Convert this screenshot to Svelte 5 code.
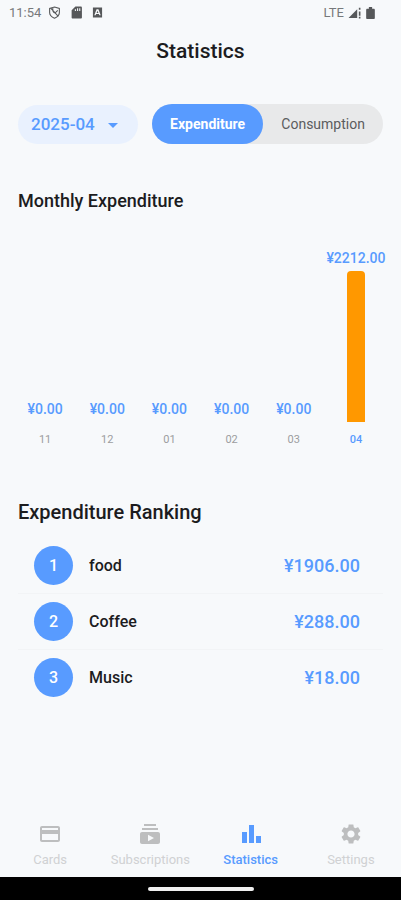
<script lang="ts">
	let month = '2025-04';
	let mode = 'Expenditure';

	const modes = ['Expenditure', 'Consumption'];

	const months = [
		{ label: '11', total: 0 },
		{ label: '12', total: 0 },
		{ label: '01', total: 0 },
		{ label: '02', total: 0 },
		{ label: '03', total: 0 },
		{ label: '04', total: 2212 }
	];

	const ranking = [
		{ name: 'food', amount: 1906 },
		{ name: 'Coffee', amount: 288 },
		{ name: 'Music', amount: 18 }
	];

	const tabs = [
		{
			name: 'Cards',
			icon: 'M20 4H4c-1.11 0-1.99.89-1.99 2L2 18c0 1.11.89 2 2 2h16c1.11 0 2-.89 2-2V6c0-1.11-.89-2-2-2zm0 14H4v-6h16v6zm0-10H4V6h16v2z'
		},
		{
			name: 'Subscriptions',
			icon: 'M20 8H4V6h16v2zm-2-6H6v2h12V2zm4 10v8c0 1.1-.9 2-2 2H4c-1.1 0-2-.9-2-2v-8c0-1.1.9-2 2-2h16c1.1 0 2 .9 2 2zm-6 4l-6-3.27v6.53L16 16z'
		},
		{
			name: 'Statistics',
			icon: 'M3 10h5v11H3zM10 3h5v18h-5zM17 14h5v7h-5z'
		},
		{
			name: 'Settings',
			icon: 'M19.14 12.94c.04-.3.06-.61.06-.94 0-.32-.02-.64-.07-.94l2.03-1.58c.18-.14.23-.41.12-.61l-1.92-3.32c-.12-.22-.37-.29-.59-.22l-2.39.96c-.5-.38-1.03-.7-1.62-.94l-.36-2.54c-.04-.24-.24-.41-.48-.41h-3.84c-.24 0-.43.17-.47.41l-.36 2.54c-.59.24-1.13.57-1.62.94l-2.39-.96c-.22-.08-.47 0-.59.22L2.74 8.87c-.12.21-.08.47.12.61l2.03 1.58c-.05.3-.09.63-.09.94s.02.64.07.94l-2.03 1.58c-.18.14-.23.41-.12.61l1.92 3.32c.12.22.37.29.59.22l2.39-.96c.5.38 1.03.7 1.62.94l.36 2.54c.05.24.24.41.48.41h3.84c.24 0 .44-.17.47-.41l.36-2.54c.59-.24 1.13-.56 1.62-.94l2.39.96c.22.08.47 0 .59-.22l1.92-3.32c.12-.22.07-.47-.12-.61l-2.01-1.58zM12 15.6c-1.98 0-3.6-1.62-3.6-3.6s1.62-3.6 3.6-3.6 3.6 1.62 3.6 3.6-1.62 3.6-3.6 3.6z'
		}
	];

	let tab = 'Statistics';

	const max = Math.max(...months.map(m => m.total));

	function yen(value: number) {
		return '¥' + value.toFixed(2);
	}
</script>

<div class="screen">
	<div class="status">
		<span>11:54</span>
		<svg class="shield" width="13" height="13" viewBox="0 0 24 24" fill="none" stroke="currentColor" stroke-width="2">
			<path d="M12 2L21 4.500V12c0 5-4 8.500-9 10.500C7 20.500 3 17 3 12V4.500z" />
			<path d="M5 4l14 15M9 4c-1 5 1 9 4 9l5-5" />
		</svg>
		<svg width="13" height="13" viewBox="0 0 24 24" fill="currentColor">
			<path fill-rule="evenodd" d="M20 1H10L3 8v13c0 1 1 2 2 2h15c1 0 2-1 2-2V3c0-1-1-2-2-2zM9 9V6h2v3zm4 0V4h2v5zm4 0V4h2v5z" />
		</svg>
		<svg class="keyboard" width="11" height="11" viewBox="0 0 24 24" fill="currentColor">
			<path fill-rule="evenodd" d="M2 1h20v22H2zM10 5L5 18h3l1-3h6l1 3h3L14 5zm2 3l2 5h-4z" />
		</svg>
		<span class="network">LTE</span>
		<svg width="13" height="13" viewBox="0 0 24 24" fill="currentColor">
			<path d="M1 22L17 6v16zM20 10h3v8h-3zM20 20h3v3h-3zM20 3h3v4h-3z" />
		</svg>
		<svg class="battery" width="13" height="14" viewBox="0 0 24 24" fill="currentColor">
			<path d="M9 1h6v3h3c1 0 2 1 2 2v15c0 1-1 2-2 2H6c-1 0-2-1-2-2V6c0-1 1-2 2-2h3z" />
		</svg>
	</div>

	<header>
		<h1>Statistics</h1>
	</header>

	<main>
		<div class="filters">
			<div class="month">
				<select aria-label="Month" bind:value={month}>
					<option>2025-04</option>
					<option>2025-03</option>
					<option>2025-02</option>
				</select>
				<svg width="10" height="5" viewBox="0 0 10 5" fill="currentColor"><path d="M0 0h10L5 5z" /></svg>
			</div>
			<div class="modes">
				{#each modes as name}
					<button class:active={mode === name} aria-pressed={mode === name} on:click={() => mode = name}>{name}</button>
				{/each}
			</div>
		</div>

		<h2 class="chart-title">Monthly Expenditure</h2>
		<div class="chart">
			{#each months as m}
				<div class="column" class:current={m.total === max}>
					<div class="plot">
						<span class="total">{yen(m.total)}</span>
						<div class="bar" style="height: {m.total / max * 151}px"></div>
					</div>
					<span class="label">{m.label}</span>
				</div>
			{/each}
		</div>

		<h2 class="ranking-title">Expenditure Ranking</h2>
		<ol>
			{#each ranking as item, i}
				<li>
					<span class="rank">{i + 1}</span>
					<span class="name">{item.name}</span>
					<span class="amount">{yen(item.amount)}</span>
				</li>
			{/each}
		</ol>
	</main>

	<nav>
		{#each tabs as t}
			<a href="#{t.name.toLowerCase()}" class:active={tab === t.name} on:click={() => tab = t.name}>
				<svg width="24" height="24" viewBox="0 0 24 24" fill="currentColor"><path d={t.icon} /></svg>
				<span>{t.name}</span>
			</a>
		{/each}
	</nav>
	<div class="gesture"><div class="handle"></div></div>
</div>

<style>
	:global(body) {
		background: #f7f9fb;
	}

	.screen {
		display: flex;
		flex-direction: column;
		min-height: 100vh;
		background: #f7f9fb;
		color: #1c1c1e;
		font-family: Roboto, "Liberation Sans", sans-serif;
	}

	.status {
		display: flex;
		align-items: center;
		height: 25px;
		padding: 0 24px 0 9px;
		color: #56585a;
		font-size: 13px;
	}

	.status span {
		color: #77797b;
	}

	.shield {
		margin: 0 9px 0 7px;
	}

	.keyboard {
		margin-left: 9px;
	}

	.status .network {
		margin: 0 4px 0 auto;
	}

	.battery {
		margin-left: 3px;
	}

	header {
		display: flex;
		align-items: center;
		justify-content: center;
		height: 51px;
	}

	h1, h2 {
		margin: 0;
		font-weight: 500;
	}

	h1 {
		font-size: 21px;
		line-height: 24px;
	}

	h2 {
		padding: 0 18px;
		line-height: 24px;
	}

	main {
		flex: 1;
	}

	.filters {
		display: flex;
		align-items: center;
		gap: 14px;
		padding: 28px 18px 0;
	}

	.month {
		position: relative;
		flex: 0 0 120px;
		color: #589bff;
	}

	select {
		appearance: none;
		width: 100%;
		height: 39px;
		padding: 0 32px 0 13px;
		border: 0;
		border-radius: 20px;
		background: #e9f1fe;
		color: inherit;
		font: 500 17px Roboto, "Liberation Sans", sans-serif;
	}

	.month svg {
		position: absolute;
		top: 18px;
		right: 20px;
		pointer-events: none;
	}

	.modes {
		display: flex;
		flex: 1;
		border-radius: 20px;
		background: #e8e9ea;
	}

	button {
		flex: 1 1 auto;
		height: 40px;
		padding: 0 16px;
		border: 0;
		border-radius: 20px;
		background: none;
		color: #5b5c5e;
		font: 400 14px Roboto, "Liberation Sans", sans-serif;
		cursor: pointer;
	}

	button.active {
		background: #589bff;
		color: #fff;
		font-weight: 700;
	}

	.chart-title {
		margin-top: 45px;
		font-size: 18px;
	}

	.chart {
		display: flex;
		margin-top: 37px;
		padding: 0 14px;
	}

	.column {
		display: flex;
		flex: 1 1 0;
		flex-direction: column;
		align-items: center;
		min-width: 0;
	}

	.plot {
		display: flex;
		flex-direction: column;
		align-items: center;
		justify-content: flex-end;
		height: 172px;
	}

	.total {
		margin-bottom: 5px;
		color: #589bff;
		font-size: 14px;
		font-weight: 500;
		line-height: 16px;
	}

	.bar {
		width: 18px;
		border-radius: 4px 4px 0 0;
		background: #ff9800;
	}

	.label {
		margin-top: 10px;
		color: #9c9d9f;
		font-size: 11px;
		line-height: 16px;
	}

	.current .label {
		color: #589bff;
		font-weight: 500;
	}

	.ranking-title {
		margin-top: 52px;
		font-size: 20px;
	}

	ol {
		margin: 14px 18px 0;
		padding: 0;
		list-style: none;
	}

	li {
		display: flex;
		align-items: center;
		gap: 16px;
		padding: 8px 23px 8px 16px;
		border-bottom: 1px solid #f2f4f6;
	}

	li:last-child {
		border-bottom: 0;
	}

	.rank {
		width: 39px;
		border-radius: 50%;
		background: #589bff;
		color: #fff;
		font-size: 16px;
		font-weight: 500;
		line-height: 39px;
		text-align: center;
	}

	.name {
		flex: 1;
		font-size: 16px;
		font-weight: 500;
	}

	.amount {
		color: #589bff;
		font-size: 18px;
		font-weight: 500;
	}

	nav {
		display: flex;
		height: 57px;
	}

	nav a {
		display: flex;
		flex: 1 1 0;
		flex-direction: column;
		align-items: center;
		gap: 6px;
		padding-top: 2px;
		color: #bdbebf;
		font-size: 13px;
		line-height: 16px;
		text-decoration: none;
	}

	nav span {
		color: #d0d1d3;
	}

	nav .active, nav .active span {
		color: #589bff;
		font-weight: 500;
	}

	.gesture {
		display: flex;
		align-items: center;
		justify-content: center;
		height: 23px;
		background: #000;
	}

	.handle {
		width: 106px;
		height: 4px;
		border-radius: 2px;
		background: #f0f0f0;
	}
</style>
